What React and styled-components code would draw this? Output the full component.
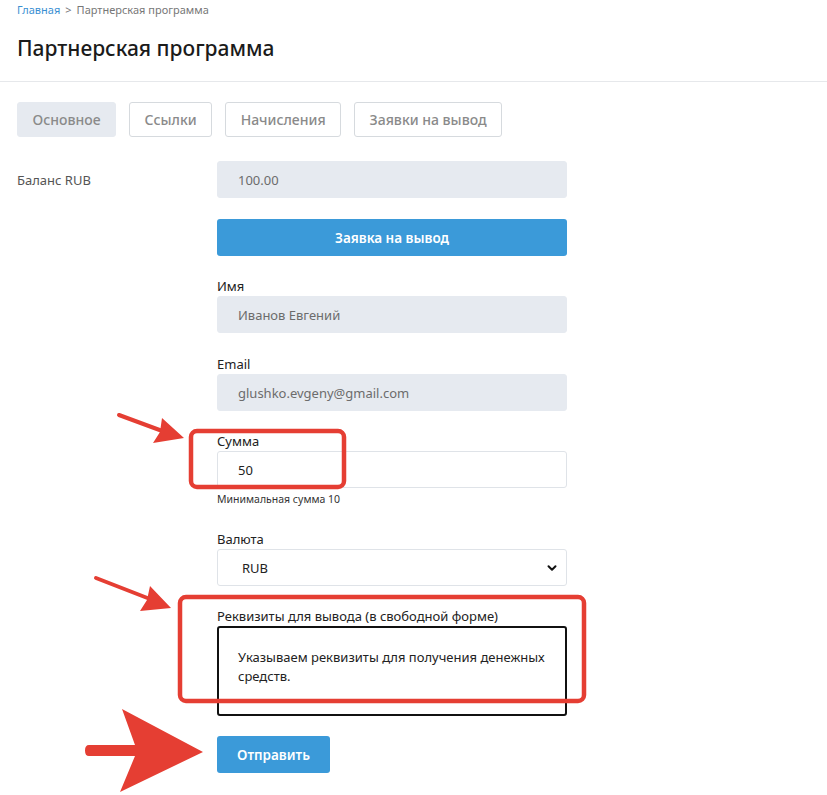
import React from "react";
import styled, { createGlobalStyle } from "styled-components";

const colors = {
  blue: "#3b9ad9",
  link: "#3a8fd2",
  field: "#e6eaf0",
  border: "#dfe3e8",
  text: "#212529",
  muted: "#6c6c6c",
  red: "#e53e33",
};

const GlobalStyle = createGlobalStyle`
  html, body {
    margin: 0;
    padding: 0;
    background: #fff;
  }
  body {
    font-family: "Noto Sans", "Open Sans", sans-serif;
    color: ${colors.text};
  }
  * {
    box-sizing: border-box;
  }
`;

const Page = styled.div`
  position: relative;
  width: 827px;
  height: 795px;
  overflow: hidden;
`;

const Header = styled.div`
  padding: 0 17px;
`;

const Breadcrumbs = styled.div`
  display: flex;
  align-items: center;
  gap: 5px;
  height: 18px;
  font-size: 11px;
  color: #777;

  a {
    color: ${colors.link};
    text-decoration: none;
  }
`;

const Title = styled.h1`
  margin: 16px 0 0;
  height: 47px;
  font-size: 21px;
  font-weight: 500;
  line-height: 28px;
  color: #1b1b1b;
`;

const Divider = styled.hr`
  margin: 0;
  border: 0;
  border-top: 1px solid #e6e8eb;
`;

const Content = styled.div`
  padding: 20px 17px 0;
`;

const Tabs = styled.div`
  display: flex;
  gap: 13px;
`;

const Tab = styled.button`
  height: 35px;
  padding: 0 14.5px;
  font-family: inherit;
  font-size: 14px;
  font-weight: 500;
  color: #8a8a8a;
  background: ${({ $active }) => ($active ? colors.field : "#fff")};
  border: 1px solid ${({ $active }) => ($active ? colors.field : "#d6dade")};
  border-radius: 3px;
`;

const Form = styled.div`
  display: grid;
  grid-template-columns: 200px 350px;
  margin-top: 24px;
`;

const SideLabel = styled.div`
  display: flex;
  align-items: center;
  height: 37px;
  font-size: 13px;
  color: #555;
`;

const Fields = styled.div`
  display: flex;
  flex-direction: column;
`;

const Group = styled.div`
  margin-bottom: ${({ $mb }) => $mb ?? 20}px;
`;

const Label = styled.div`
  height: 20px;
  font-size: 13px;
  line-height: 20px;
  color: #222;
`;

const Field = styled.input`
  display: block;
  width: 100%;
  height: 37px;
  padding: 0 20px;
  font-family: inherit;
  font-size: 13px;
  color: ${({ readOnly }) => (readOnly ? colors.muted : "#222")};
  background: ${({ readOnly }) => (readOnly ? colors.field : "#fff")};
  border: 1px solid ${({ readOnly }) => (readOnly ? colors.field : colors.border)};
  border-radius: 3px;
  outline: none;
`;

const Help = styled.div`
  margin-top: 4px;
  font-size: 10.5px;
  line-height: 14px;
  color: #333;
`;

const SelectBox = styled.div`
  display: flex;
  align-items: center;
  justify-content: space-between;
  height: 37px;
  padding: 0 8px 0 24px;
  font-size: 13px;
  color: #222;
  border: 1px solid ${colors.border};
  border-radius: 3px;
`;

const TextArea = styled.textarea`
  display: block;
  width: 100%;
  height: 90px;
  padding: 20px 8px 0 19px;
  font-family: inherit;
  font-size: 13px;
  line-height: 19px;
  color: #222;
  border: 2px solid #111;
  border-radius: 3px;
  resize: none;
  outline: none;
`;

const PrimaryButton = styled.button`
  height: 37px;
  width: ${({ $wide }) => ($wide ? "100%" : "auto")};
  padding: 0 20px;
  font-family: inherit;
  font-size: 13.5px;
  font-weight: 600;
  color: #fff;
  background: ${colors.blue};
  border: 0;
  border-radius: 3px;
`;

const Annotations = styled.svg`
  position: absolute;
  top: 0;
  left: 0;
  pointer-events: none;
`;

const Chevron = () => (
  <svg width="12" height="12" viewBox="0 0 12 12">
    <path d="M2.5 4.2 6 7.7 9.5 4.2" fill="none" stroke="#111" strokeWidth="2" strokeLinecap="round" strokeLinejoin="round" />
  </svg>
);

const App = () => {
  return (
    <Page>
      <GlobalStyle />
      <Header>
        <Breadcrumbs>
          <a href="#">Главная</a>
          <span>&gt;</span>
          <span>Партнерская программа</span>
        </Breadcrumbs>
        <Title>Партнерская программа</Title>
      </Header>
      <Divider />

      <Content>
        <Tabs>
          <Tab $active>Основное</Tab>
          <Tab>Ссылки</Tab>
          <Tab>Начисления</Tab>
          <Tab>Заявки на вывод</Tab>
        </Tabs>

        <Form>
          <SideLabel>Баланс RUB</SideLabel>
          <Fields>
            <Group $mb={21}>
              <Field readOnly value="100.00" />
            </Group>
            <Group $mb={20}>
              <PrimaryButton $wide>Заявка на вывод</PrimaryButton>
            </Group>
            <Group $mb={21}>
              <Label>Имя</Label>
              <Field readOnly value="Иванов Евгений" />
            </Group>
            <Group>
              <Label>Email</Label>
              <Field readOnly value="glushko.evgeny@gmail.com" />
            </Group>
            <Group $mb={23}>
              <Label>Сумма</Label>
              <Field defaultValue="50" />
              <Help>Минимальная сумма 10</Help>
            </Group>
            <Group>
              <Label>Валюта</Label>
              <SelectBox>
                <span>RUB</span>
                <Chevron />
              </SelectBox>
            </Group>
            <Group>
              <Label>Реквизиты для вывода (в свободной форме)</Label>
              <TextArea defaultValue="Указываем реквизиты для получения денежных средств." />
            </Group>
            <div>
              <PrimaryButton>Отправить</PrimaryButton>
            </div>
          </Fields>
        </Form>
      </Content>

      <Annotations width="827" height="795" viewBox="0 0 827 795">
        <g fill="none" stroke={colors.red} strokeWidth="4.5">
          <rect x="191" y="431" width="153" height="56" rx="6" />
          <rect x="180" y="597" width="404" height="104" rx="6" />
        </g>
        <g stroke={colors.red} strokeWidth="4" strokeLinecap="round">
          <line x1="119" y1="415" x2="165" y2="432" />
          <line x1="96" y1="578" x2="150" y2="599" />
        </g>
        <g fill={colors.red}>
          <polygon points="162,418 184,438 153,443 160,432" />
          <polygon points="150,586 171,608 140,611 147,600" />
          <path d="M122 709 L203 752 L120 792 L135 756 L89 756 Q85 756 85 750.5 Q85 745 89 745 L135 745 Z" />
        </g>
      </Annotations>
    </Page>
  );
};

export default App;
